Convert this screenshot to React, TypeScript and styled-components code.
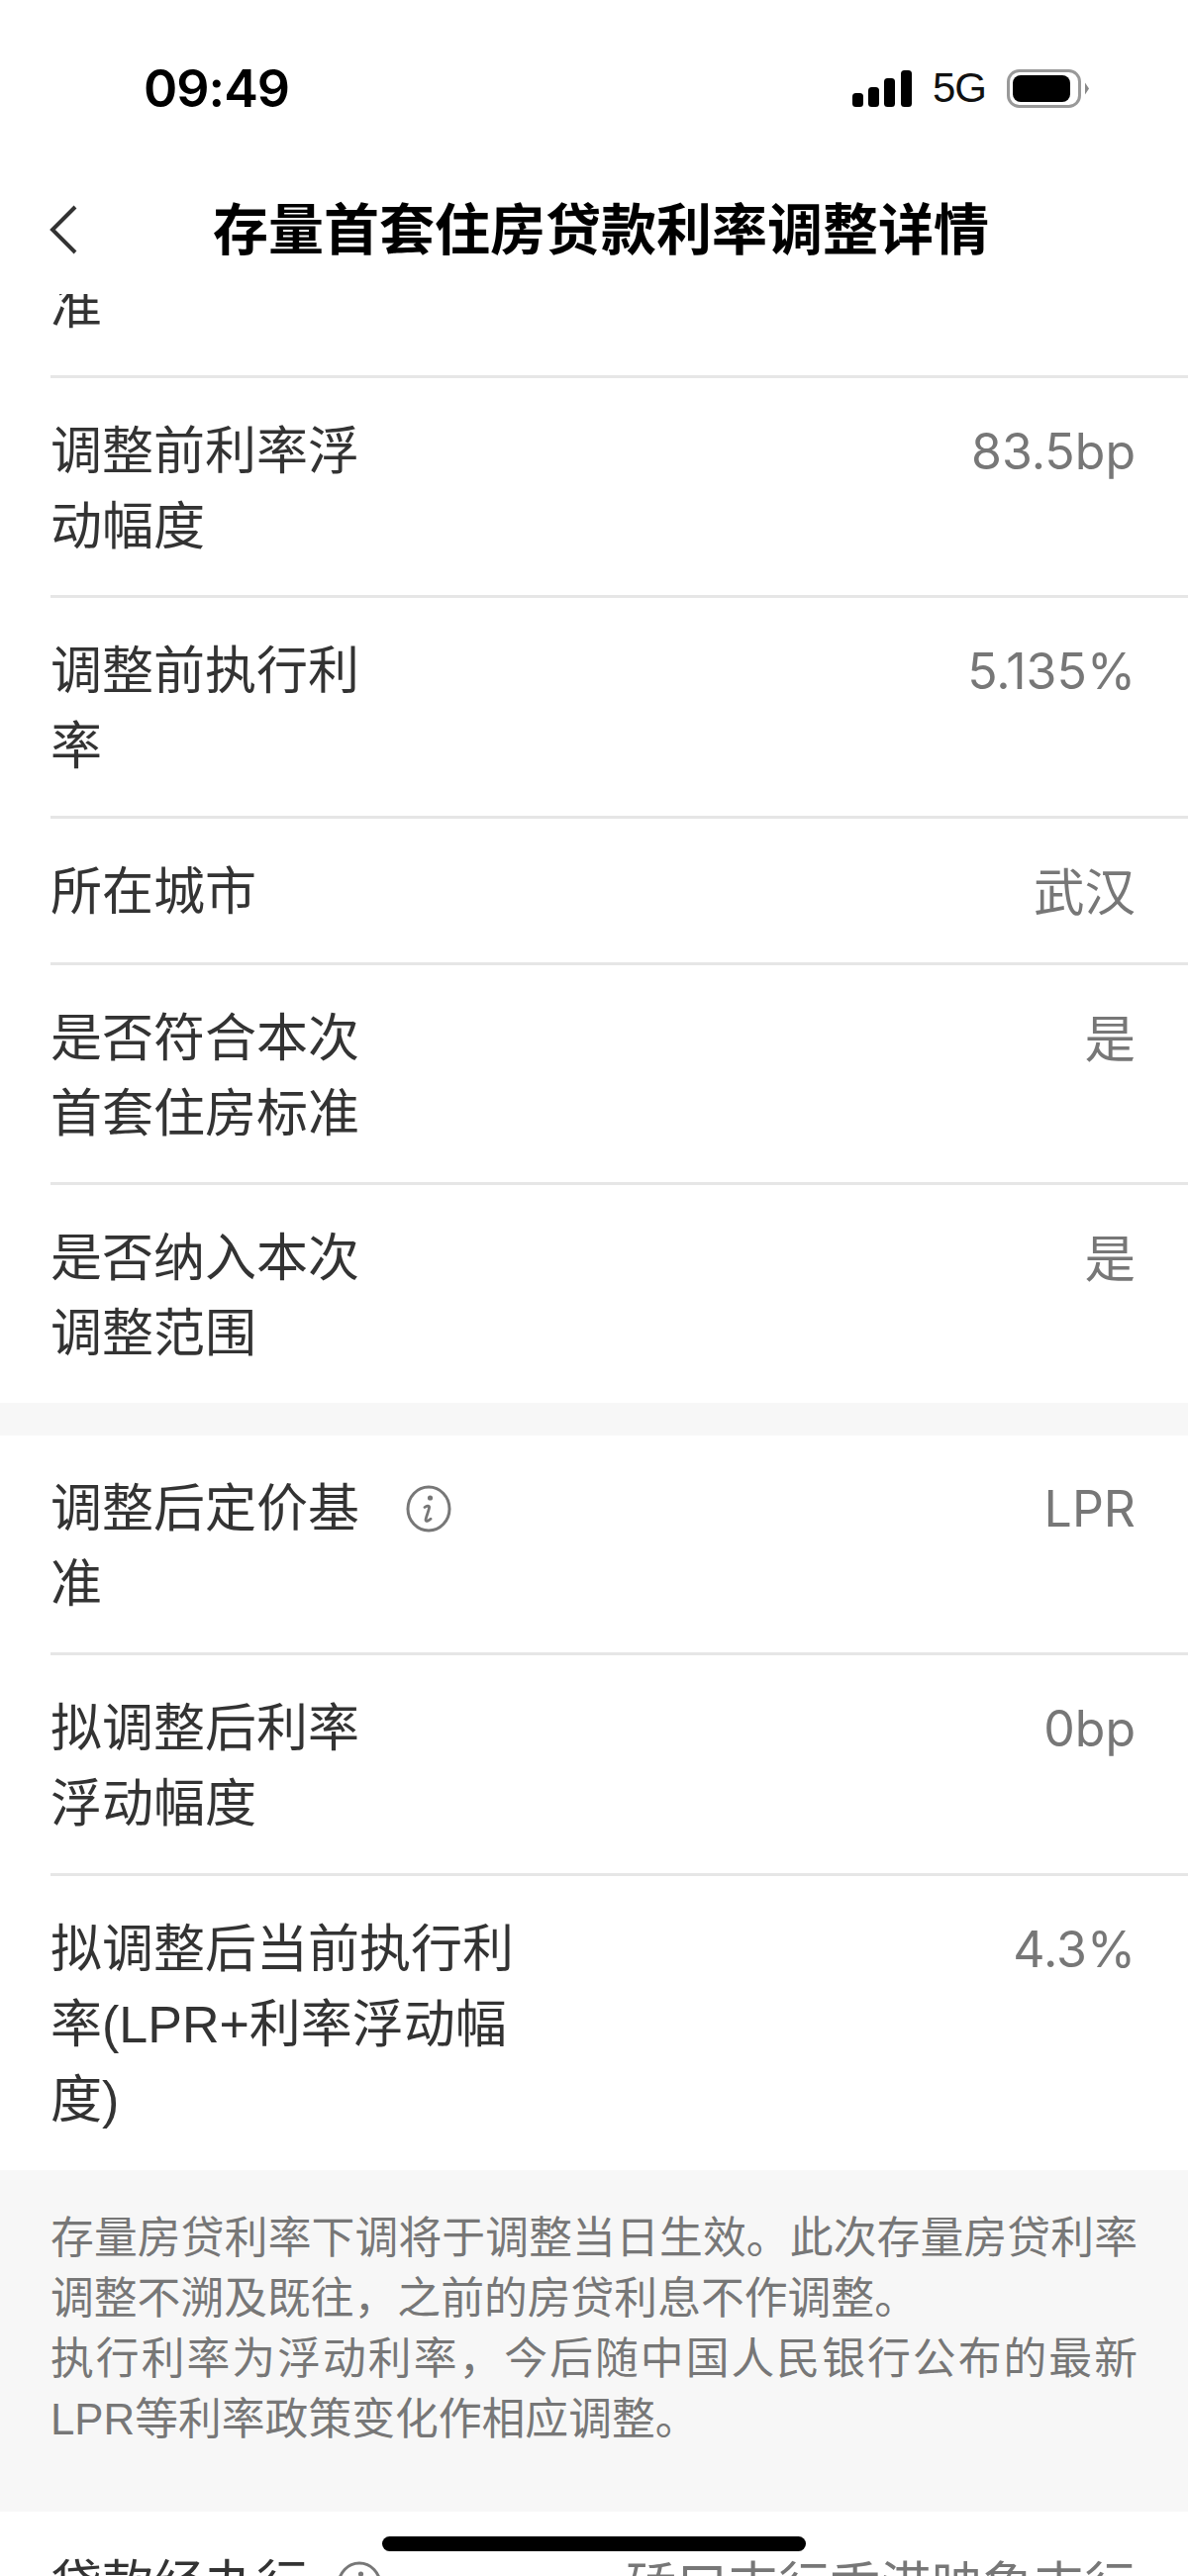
import React from "react";
import styled, { createGlobalStyle } from "styled-components";

const GlobalStyle = createGlobalStyle`
  html, body {
    margin: 0;
    padding: 0;
    background: #fff;
  }
  * {
    box-sizing: border-box;
  }
`;

const sans = `"Liberation Sans", "Noto Sans CJK SC", sans-serif`;
const digits = `Inter, "Noto Sans CJK SC", sans-serif`;

type Item = {
  label: string;
  value: string;
  wide?: boolean;
  info?: boolean;
  cjk?: boolean;
};

const firstGroup: Item[] = [
  { label: "调整前定价基准", value: "" },
  { label: "调整前利率浮动幅度", value: "83.5bp" },
  { label: "调整前执行利率", value: "5.135%" },
  { label: "所在城市", value: "武汉", cjk: true },
  { label: "是否符合本次首套住房标准", value: "是", cjk: true },
  { label: "是否纳入本次调整范围", value: "是", cjk: true },
];

const secondGroup: Item[] = [
  { label: "调整后定价基准", value: "LPR", info: true },
  { label: "拟调整后利率浮动幅度", value: "0bp" },
  { label: "拟调整后当前执行利率(LPR+利率浮动幅度)", value: "4.3%", wide: true },
];

const InfoIcon: React.FC<{ gap: number }> = ({ gap }) => (
  <InfoSvg $gap={gap} viewBox="0 0 46 48" fill="none">
    <ellipse cx="23" cy="24" rx="21" ry="22" stroke="#777" strokeWidth="3" />
    <circle cx="24.5" cy="13" r="2.6" fill="#777" />
    <path
      d="M19 22.5c2-1.6 4.6-2.2 4.6-.2 0 2.6-3.6 10.8-3.6 13 0 2 2.8 1 5-1"
      stroke="#777"
      strokeWidth="2.8"
      strokeLinecap="round"
    />
  </InfoSvg>
);

const DetailRow: React.FC<{ item: Item }> = ({ item }) => (
  <Row>
    <LabelWrap>
      <Label $wide={item.wide}>{item.label}</Label>
      {item.info && <InfoIcon gap={47} />}
    </LabelWrap>
    <Value $cjk={item.cjk}>{item.value}</Value>
  </Row>
);

const App: React.FC = () => (
  <Screen>
    <GlobalStyle />
    <StatusBar>
      <Time>09:49</Time>
      <StatusIcons>
        <svg width="60" height="37" viewBox="0 0 60 37" fill="#000">
          <rect x="0" y="23" width="11" height="14" rx="3.5" />
          <rect x="16" y="17" width="11" height="20" rx="3.5" />
          <rect x="32" y="8" width="11" height="29" rx="3.5" />
          <rect x="49" y="0" width="11" height="37" rx="3.5" />
        </svg>
        <Network>5G</Network>
        <svg width="83" height="39" viewBox="0 0 83 39">
          <rect x="1.5" y="1.5" width="72" height="36" rx="11" fill="none" stroke="#999" strokeWidth="3" />
          <rect x="6" y="6" width="58" height="27" rx="8" fill="#000" />
          <path d="M79 13.5l4 6-4 6z" fill="#888" />
        </svg>
      </StatusIcons>
    </StatusBar>
    <NavBar>
      <BackIcon viewBox="0 0 28 50" fill="none">
        <path d="M26 2 3 25l23 23" stroke="#333" strokeWidth="4" />
      </BackIcon>
      <Title>存量首套住房贷款利率调整详情</Title>
    </NavBar>
    <Scroller>
      <ScrollContent>
        <Group>
          {firstGroup.map((item) => (
            <DetailRow key={item.label} item={item} />
          ))}
        </Group>
        <GroupGap />
        <LastGroup>
          {secondGroup.map((item) => (
            <DetailRow key={item.label} item={item} />
          ))}
        </LastGroup>
        <Note>
          存量房贷利率下调将于调整当日生效。此次存量房贷利率调整不溯及既往，之前的房贷利息不作调整。
          <br />
          执行利率为浮动利率，今后随中国人民银行公布的最新LPR等利率政策变化作相应调整。
        </Note>
        <Group>
          <Row>
            <LabelWrap>
              <Label $auto>贷款经办行</Label>
              <InfoIcon gap={29} />
            </LabelWrap>
            <Value $cjk>硚口支行香港映象支行</Value>
          </Row>
        </Group>
      </ScrollContent>
    </Scroller>
    <HomeBar />
  </Screen>
);

const Screen = styled.div`
  position: relative;
  display: flex;
  flex-direction: column;
  width: 1200px;
  height: 2602px;
  overflow: hidden;
  background: #fff;
  font-family: ${sans};
`;

const StatusBar = styled.div`
  display: flex;
  align-items: center;
  justify-content: space-between;
  height: 178px;
  padding: 0 100px 0 145px;
`;

const Time = styled.div`
  font-family: ${digits};
  font-size: 52px;
  font-weight: 600;
  letter-spacing: -1px;
  color: #000;
`;

const StatusIcons = styled.div`
  display: flex;
  align-items: center;
  gap: 21px;
`;

const Network = styled.div`
  font-size: 42px;
  letter-spacing: -1px;
  color: #111;
`;

const NavBar = styled.div`
  display: flex;
  align-items: center;
  height: 119px;
  padding: 0 0 12px 50px;
`;

const BackIcon = styled.svg`
  width: 28px;
  height: 50px;
  flex-shrink: 0;
`;

const Title = styled.h1`
  margin: 0 0 8px 137px;
  font-size: 56px;
  font-weight: 700;
  color: #000;
  white-space: nowrap;
`;

const Scroller = styled.div`
  flex: 1;
  overflow: hidden;
`;

const ScrollContent = styled.div`
  margin-top: -138px;
`;

const Group = styled.div`
  padding-left: 51px;
`;

const LastGroup = styled(Group)`
  padding-bottom: 2px;
`;

const Row = styled.div`
  display: flex;
  align-items: flex-start;
  justify-content: space-between;
  min-height: 148px;
  padding: 36px 53px 31.5px 0;
  border-bottom: 3px solid #e6e6e6;
  &:last-child {
    border-bottom: none;
  }
`;

const LabelWrap = styled.div`
  display: flex;
  align-items: flex-start;
`;

const Label = styled.div<{ $wide?: boolean; $auto?: boolean }>`
  width: ${(p) => (p.$auto ? "auto" : p.$wide ? "470px" : "312px")};
  font-size: 52px;
  line-height: 76px;
  color: #333;
`;

const Value = styled.div<{ $cjk?: boolean }>`
  font-family: ${digits};
  font-size: ${(p) => (p.$cjk ? "51.5px" : "50px")};
  line-height: 76px;
  color: #777;
  white-space: nowrap;
`;

const InfoSvg = styled.svg<{ $gap: number }>`
  width: 46px;
  height: 48px;
  margin: 14px 0 0 ${(p) => p.$gap}px;
  flex-shrink: 0;
`;

const GroupGap = styled.div`
  height: 33px;
  background: #f7f7f7;
`;

const Note = styled.div`
  height: 345px;
  padding: 38px 51px 0;
  background: #f7f7f7;
  font-size: 43.8px;
  line-height: 61px;
  text-align: justify;
  color: #777;
`;

const HomeBar = styled.div`
  position: absolute;
  left: 386px;
  bottom: 25px;
  width: 428px;
  height: 15px;
  border-radius: 8px;
  background: #000;
`;

export default App;
